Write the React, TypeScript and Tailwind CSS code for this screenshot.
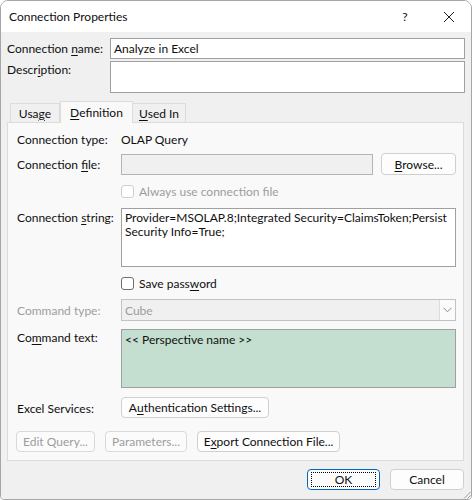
import React from 'react';

const U = ({ children }: { children: React.ReactNode }) => <span className="underline underline-offset-2">{children}</span>;

function Btn({ children, w, disabled, primary, h = 'h-[21px]' }: { children: React.ReactNode; w: string; disabled?: boolean; primary?: boolean; h?: string }) {
  return (
    <div
      className={`${w} ${h} shrink-0 flex items-center justify-center rounded-[4px] border ${
        primary ? 'border-[#0067c0] bg-[#fdfdfd]' : disabled ? 'border-[#d9d9d9] bg-[#fbfbfb] text-[#9d9d9d]' : 'border-[#d0d0d0] bg-[#fdfdfd]'
      }`}
    >
      {primary ? (
        <div className="h-[15px] w-[calc(100%-6px)] border border-dotted border-black flex items-center justify-center">{children}</div>
      ) : (
        children
      )}
    </div>
  );
}

function Check({ label, disabled }: { label: React.ReactNode; disabled?: boolean }) {
  return (
    <div className="h-[21px] flex items-center gap-[5px]">
      <div className={`w-[13px] h-[13px] rounded-[3px] border ${disabled ? 'border-[#cfcfcf]' : 'border-[#6e6e6e]'} bg-white`} />
      <span className={disabled ? 'text-[#9d9d9d]' : ''}>{label}</span>
    </div>
  );
}

export default function App() {
  return (
    <div className="w-[472px] h-[500px] bg-white text-[12px] leading-[15px] text-[#0f0f0f]" style={{ fontFamily: 'Lato, sans-serif' }}>
      <div className="relative h-full flex flex-col border border-[#a6a6a6] rounded-t-[8px] rounded-b-[4px] overflow-hidden">
        {/* title bar */}
        <div className="h-[31px] shrink-0 bg-white flex items-center pl-[8px]">
          <span className="flex-1">Connection Properties</span>
          <span className="w-[20px] text-center mr-[28px]">?</span>
          <svg width="12" height="12" viewBox="0 0 12 12" className="mr-[16px]">
            <path d="M1 1L11 11M11 1L1 11" stroke="#1b1b1b" strokeWidth="1" />
          </svg>
        </div>

        <div className="flex-1 bg-[#f0f0f0] px-[6px] pt-[6px] flex flex-col">
          <div className="flex items-center h-[21px]">
            <div className="w-[103px]">Connection <U>n</U>ame:</div>
            <div className="flex-1 h-[21px] bg-white border border-[#a0a0a0] px-[3px] flex items-center">Analyze in Excel</div>
          </div>
          <div className="flex mt-[2px]">
            <div className="w-[103px] pt-[1px]">Descr<U>i</U>ption:</div>
            <div className="flex-1 h-[32px] bg-white border border-[#a0a0a0]" />
          </div>

          {/* tabs */}
          <div className="flex items-end mt-[8px] pl-[3px] h-[21px]">
            <div className="w-[50px] h-[19px] border border-b-0 border-[#dcdcdc] bg-[#f0f0f0] flex items-center justify-center">Usa<U>g</U>e</div>
            <div className="w-[73px] h-[22px] -mb-px border border-b-0 border-[#dcdcdc] bg-[#f9f9f9] flex items-center justify-center z-10"><U>D</U>efinition</div>
            <div className="w-[53px] h-[19px] border border-b-0 border-l-0 border-[#dcdcdc] bg-[#f0f0f0] flex items-center justify-center"><U>U</U>sed In</div>
          </div>
          <div className="w-[457px] h-[339px] border border-[#dcdcdc] bg-[#f9f9f9] pl-[9px] pr-[7px] flex flex-col">
            <div className="flex items-center h-[21px] mt-[6px]">
              <div className="w-[104px]">Connection type:</div>
              <div>OLAP Query</div>
            </div>
            <div className="flex items-center h-[22px] mt-[3px]">
              <div className="w-[104px]">Connection <U>f</U>ile:</div>
              <div className="w-[252px] h-[21px] mt-[1px] bg-[#f0f0f0] border border-[#b4b4b4]" />
              <div className="ml-[8px]"><Btn w="w-[75px]" h="h-[22px]"><U>B</U>rowse...</Btn></div>
            </div>
            <div className="ml-[104px] mt-[6px]">
              <Check label="Always use connection file" disabled />
            </div>
            <div className="flex mt-[6px]">
              <div className="w-[104px] pt-[2px]">Connection <U>s</U>tring:</div>
              <div className="flex-1 h-[59px] bg-white border border-[#a0a0a0] px-[3px] pt-[2px] leading-[14px]">
                Provider=MSOLAP.8;Integrated Security=ClaimsToken;Persist Security Info=True;
              </div>
            </div>
            <div className="ml-[104px] mt-[6px]">
              <Check label={<>Save pass<U>w</U>ord</>} />
            </div>
            <div className="flex items-center mt-[5px]">
              <div className="w-[104px] text-[#9d9d9d]">Command type:</div>
              <div className="flex-1 h-[22px] bg-[#f0f0f0] border border-[#c2c2c2] flex items-center">
                <span className="flex-1 pl-[3px] text-[#9d9d9d]">Cube</span>
                <div className="w-[16px] h-[20px] bg-[#fbfbfb] border-l border-[#dcdcdc] flex items-center justify-center">
                  <svg width="9" height="6" viewBox="0 0 9 6"><path d="M0.5 0.8L4.5 4.8L8.5 0.8" fill="none" stroke="#8a8a8a" strokeWidth="1" /></svg>
                </div>
              </div>
            </div>
            <div className="flex mt-[8px]">
              <div className="w-[104px] pt-[1px]">Co<U>m</U>mand text:</div>
              <div className="flex-1 h-[59px] bg-[#c4dfd0] border border-[#a0a0a0] px-[3px] pt-[2px]">&lt;&lt; Perspective name &gt;&gt;</div>
            </div>
            <div className="flex items-center mt-[9px]">
              <div className="w-[104px] pt-[2px]">Excel Services:</div>
              <Btn w="w-[148px]">A<U>u</U>thentication Settings...</Btn>
            </div>
            <div className="flex gap-[10px] mt-[13px] -ml-px">
              <Btn w="w-[79px]" disabled>Edit Query...</Btn>
              <Btn w="w-[82px]" disabled>Parameters...</Btn>
              <Btn w="w-[143px]">E<U>x</U>port Connection File...</Btn>
            </div>
          </div>

          <div className="flex justify-end gap-[10px] mt-[8px] pr-[1px]">
            <Btn w="w-[73px]" primary>OK</Btn>
            <Btn w="w-[74px]">Cancel</Btn>
          </div>
        </div>

        {/* resize grip */}
        <svg width="9" height="9" viewBox="0 0 9 9" className="absolute right-0 bottom-0">
          <path d="M8.5 2L2 8.5M8.5 5.5L5.5 8.5" stroke="#a0a0a0" strokeWidth="1" />
        </svg>
      </div>
    </div>
  );
}
